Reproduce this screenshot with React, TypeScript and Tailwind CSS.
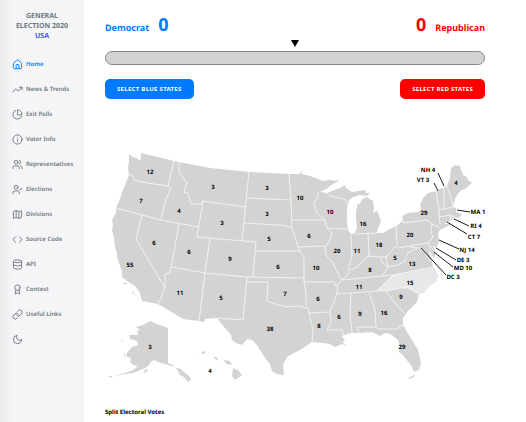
import type { ReactNode } from "react";
import {
  Award,
  Code,
  Database,
  House,
  Info,
  Link,
  Map as MapIcon,
  TrendingUp,
  UserCheck,
  Users,
} from "lucide-react";
import { FiMoon, FiPieChart } from "react-icons/fi";

const iconClass = "size-[11px] shrink-0";

const navItems: { label: string; icon: ReactNode; active?: boolean }[] = [
  { label: "Home", icon: <House className={iconClass} />, active: true },
  { label: "News & Trends", icon: <TrendingUp className={iconClass} /> },
  { label: "Exit Polls", icon: <FiPieChart className={iconClass} /> },
  { label: "Voter Info", icon: <Info className={iconClass} /> },
  { label: "Representatives", icon: <Users className={iconClass} /> },
  { label: "Elections", icon: <UserCheck className={iconClass} /> },
  { label: "Divisions", icon: <MapIcon className={iconClass} /> },
  { label: "Source Code", icon: <Code className={iconClass} /> },
  { label: "API", icon: <Database className={iconClass} /> },
  { label: "Contest", icon: <Award className={iconClass} /> },
  { label: "Useful Links", icon: <Link className={iconClass} /> },
];

// Outline of the contiguous states.
const mainland =
  "M129 154L133 157L138 159L140 161L141 158L141 153L174 161L210 168L249 172L289 174L300 174L301 170L302 174L310 176L318 179L323 181L328 180L339 181L333 184L326 189L320 192L327 193L332 191L340 188L345 185L346 188L352 192L358 191L365 190L366 193L370 193L367 196L360 195L353 197L349 200L347 208L347 220L348 230L351 234L355 233L357 227L356 218L356 211L358 203L360 204L362 199L367 197L373 201L374 208L373 213L377 211L379 215L381 222L378 228L377 233L383 233L390 229L398 225L403 220L402 216L408 213L418 212L421 209L420 205L423 198L428 193L436 191L447 186L450 178L451 168L455 165L460 166L463 175L467 177L468 180L472 183L465 189L461 190L458 194L455 199L453 207L456 208L456 212L462 214L460 217L456 218L450 221L443 224L452 224L440 230L438 233L439 242L436 248L433 245L436 253L434 258L431 254L429 248L430 257L432 261L433 267L438 275L436 282L430 285L425 292L419 294L417 302L407 312L403 318L403 325L410 337L418 350L421 363L419 370L414 372L411 365L405 358L402 354L399 352L400 346L398 340L390 334L385 333L380 336L372 332L360 333L352 333L347 334L342 336L345 341L342 342L347 346L342 344L340 345L335 347L330 344L323 343L312 342L306 346L300 350L292 354L287 357L283 365L284 375L277 374L272 371L270 364L265 358L257 345L252 340L247 339L242 345L236 343L232 340L231 335L225 328L220 322L217 318L205 319L204 322L199 321L183 319L158 304L142 301L140 293L135 286L127 281L122 277L122 271L120 266L117 257L117 253L115 247L114 238L112 230L113 225L112 220L116 213L116 208L120 199L123 190L129 175L128 168L129 162Z";

const northCarolina =
  "M393 275L433 268L438 275L436 282L430 285L425 292L419 294L408 288L400 288L387 291L377 291L385 283Z";

const borders = [
  "M129 174L133 176L134 180L147 183L168 186",
  "M174 161L168 186L171 188L165 202L161 220",
  "M116 208L142 215L161 220L198 227",
  "M179 162L179 172L187 183L184 192L188 193L191 204L202 204L203 201L210 202L245 207",
  "M203 201L197 237L220 239L256 242",
  "M249 172L242 241",
  "M142 215L136 239L165 288L160 300L158 304",
  "M179 224L171 268L170 273L165 274L165 288",
  "M172 267L205 273L247 277L305 278",
  "M210 238L205 273L199 321",
  "M256 242L253 277M247 277L243 320L217 318",
  "M246 282L268 282L267 301L275 304L287 307L298 306L308 308L309 313",
  "M244 223L278 225L287 226L292 228L298 247L300 251L304 258L304 282L306 293L306 305",
  "M256 251L300 251M247 198L291 200",
  "M289 174L291 200L292 228M292 220L325 220",
  "M318 192L318 197L314 203L316 212L325 220L327 228L332 233L330 240L325 247L326 255L333 263L335 268L340 277L342 280",
  "M297 247L325 246M327 228L348 229M327 193L330 196L345 199L347 204",
  "M351 234L352 257L348 270M342 280L347 276L350 270L358 267L363 260L369 256L380 257L386 257L392 250L397 245L396 226",
  "M355 234L377 233M368 233L369 257M380 257L383 263L388 267",
  "M403 220L403 223L427 220L432 224L431 232L433 237L428 243L397 248",
  "M432 224L440 228M428 243L434 251",
  "M386 257L388 267L398 265L405 261L408 253L417 248L410 247M388 267L382 276",
  "M417 248L420 248L425 253L430 261",
  "M343 280L393 275L433 267M337 294L377 291L387 291",
  "M386 291L395 303L404 313M369 292L375 310L376 327",
  "M357 327L376 327L378 329L398 329L399 326L403 326M357 327L359 333",
  "M351 293L350 315L352 333M304 282L335 282L335 286L338 284L342 280M338 284L337 293L330 312L331 322L327 330L342 330L344 336",
  "M309 313L330 312M309 313L313 330L312 342",
  "M436 191L439 210L440 225M444 188L444 209M447 186L453 205M439 210L453 207M439 217L450 215L458 219M450 215L451 221",
  "M377 291L385 283L393 275M387 291L400 288L408 288L419 294",
];

const alaska =
  "M136 327L143 325L150 321L157 324L168 328L168 363L173 365L176 368L181 369L185 373L188 375L191 379L190 381L188 382L184 377L180 375L178 371L175 367L165 364L158 362L154 360L151 362L148 366L145 368L138 371L133 373L120 375L110 377L125 373L133 370L138 366L133 365L130 362L131 358L127 357L127 353L132 347L138 345L137 341L130 339L129 335L138 335L137 331L140 330Z";

const islands = [
  "M143 372L146 369L148 370L145 373Z",
  "M120 339L124 341L123 342Z",
  "M123 354L126 355L125 357Z",
  "M201 353L204 351L206 353L203 354Z",
  "M213 356L218 358L218 360L215 359Z",
  "M223 360L230 361L232 365L227 364Z",
  "M233 368L238 370L242 375L235 380L232 376Z",
  "M123 283L128 283L127 284L123 284Z",
  "M108 376L112 376L111 378Z",
  "M197 354L199 354L198 355Z",
  "M132 290L135 295L133 294Z",
  "M331 182L339 180L337 182Z",
  "M408 378L414 375L415 376L410 379Z",
];

const votes: [number, number, string][] = [
  [150, 172, "12"],
  [141, 201, "7"],
  [179, 211, "4"],
  [213, 187, "3"],
  [267, 188, "3"],
  [267, 214, "3"],
  [300, 198, "10"],
  [222, 223, "3"],
  [154, 243, "6"],
  [189, 252, "6"],
  [130, 265, "55"],
  [180, 293, "11"],
  [221, 298, "5"],
  [230, 259, "9"],
  [269, 239, "5"],
  [278, 267, "6"],
  [285, 294, "7"],
  [270, 329, "38"],
  [309, 236, "6"],
  [330, 212, "10"],
  [337, 251, "20"],
  [316, 268, "10"],
  [318, 299, "6"],
  [319, 326, "8"],
  [339, 317, "6"],
  [360, 314, "9"],
  [384, 313, "16"],
  [359, 287, "11"],
  [370, 270, "8"],
  [357, 251, "11"],
  [363, 224, "16"],
  [379, 245, "18"],
  [395, 258, "5"],
  [412, 264, "13"],
  [410, 283, "15"],
  [401, 297, "9"],
  [402, 347, "29"],
  [410, 235, "20"],
  [424, 213, "29"],
  [456, 183, "4"],
  [150, 347, "3"],
  [210, 371, "4"],
  [428, 170, "NH 4"],
  [423, 180, "VT 3"],
  [478, 212, "MA 1"],
  [476, 226, "RI 4"],
  [474, 237, "CT 7"],
  [467, 250, "NJ 14"],
  [463, 260, "DE 3"],
  [463, 268, "MD 10"],
  [453, 277, "DC 3"],
];

const leaders =
  "M438 173L444 186M434 183L438 191M457 210L470 212M454 219L469 226M447 222L467 234M439 240L459 249M436 248L456 260M434 252L453 267M421 248L446 275";

function ElectoralMap() {
  return (
    <svg viewBox="105 145 380 240" className="w-full" role="img" aria-label="Electoral map">
      <g fill="#d3d3d3" strokeLinejoin="round">
        <path d={mainland} />
        <path d={alaska} />
        {islands.map((d) => (
          <path key={d} d={d} />
        ))}
      </g>
      <path d={northCarolina} fill="#e8e8e8" />
      <path d={borders.join("")} fill="none" stroke="#fff" strokeWidth="0.7" strokeLinejoin="round" />
      <path d={leaders} stroke="#000" strokeWidth="0.9" />
      <g textAnchor="middle" className="text-[6px] font-bold">
        {votes.map(([x, y, text]) => (
          <text key={`${x}-${y}`} x={x} y={y + 2}>
            {text}
          </text>
        ))}
      </g>
    </svg>
  );
}

export default function App() {
  return (
    <div className="flex min-h-screen bg-white font-['Noto_Sans','Open_Sans',sans-serif] text-black [text-rendering:geometricPrecision]">
      <aside className="w-[84px] shrink-0 bg-[#f5f5f7] bg-linear-to-r from-[#ececee] to-[#f5f5f7] to-15% text-[#6c757d]">
        <h1 className="pt-3 text-center text-[7px] leading-[10px] font-bold">
          GENERAL
          <br />
          ELECTION 2020
          <br />
          <a href="#usa" className="text-[#3d5afe]">
            USA
          </a>
        </h1>
        <nav className="mt-[10px] pl-3">
          {navItems.map(({ label, icon, active }) => (
            <a
              key={label}
              href="#nav"
              className={`flex h-[25px] items-center gap-[3px] text-[6px] font-semibold whitespace-nowrap ${
                active ? "text-[#007bff]" : ""
              }`}
            >
              {icon}
              {label}
            </a>
          ))}
          <button type="button" aria-label="Dark mode" className="flex h-[25px] items-center">
            <FiMoon className={iconClass} />
          </button>
        </nav>
      </aside>
      <main className="min-w-0 flex-1 pt-[13px] pr-[41px] pl-[21px]">
        <header className="flex h-[27px] items-baseline justify-between text-[9px] leading-6 font-bold">
          <p className="flex items-baseline gap-[9px] text-[#007bff]">
            Democrat <span className="text-lg leading-6">0</span>
          </p>
          <p className="flex items-baseline gap-[9px] text-[#ff0000]">
            <span className="text-lg leading-6">0</span> Republican
          </p>
        </header>
        <svg viewBox="0 0 8 7" className="mx-auto block h-[7px] w-2" aria-hidden="true">
          <path d="M0 0H8L4 7Z" />
        </svg>
        <div className="mt-1 h-[14px] rounded-full border border-[#8a8a8a] bg-[#d3d3d3]" />
        <div className="mt-[14px] flex justify-between text-[6px] font-bold tracking-wider text-white">
          <button type="button" className="h-5 rounded-[5px] bg-[#007bff] px-3">
            SELECT BLUE STATES
          </button>
          <button type="button" className="h-5 rounded-[5px] bg-[#ff0000] px-3">
            SELECT RED STATES
          </button>
        </div>
        <div className="mt-[46px]">
          <ElectoralMap />
        </div>
        <h2 className="mt-[21px] text-[6px] leading-3 font-bold">Split Electoral Votes</h2>
      </main>
    </div>
  );
}
